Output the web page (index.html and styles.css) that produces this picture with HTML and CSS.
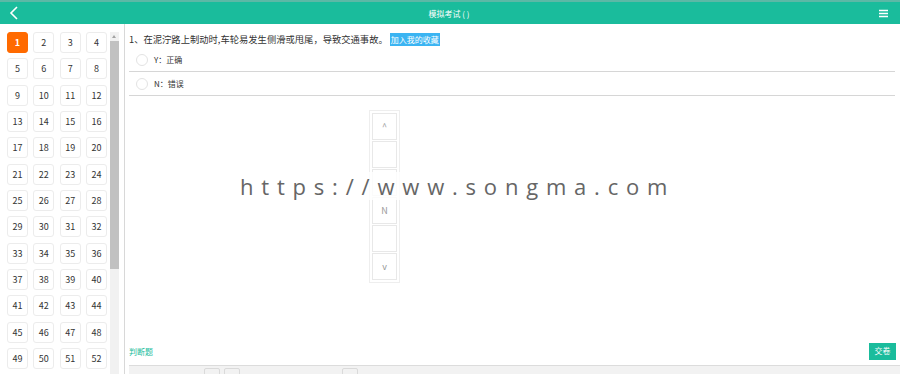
FILE: index.html
```html
<!DOCTYPE html>
<html lang="zh-CN">
<head>
  <meta charset="UTF-8">
  <meta name="viewport" content="width=device-width, initial-scale=1.0">
  <title>模拟考试</title>
  <link rel="stylesheet" href="styles.css">
</head>
<body>

  <div class="header">
    <span class="back">
      <svg width="10" height="14" viewBox="0 0 10 14"><path d="M8 1 L2 7 L8 13" fill="none" stroke="#fff" stroke-width="1.6"/></svg>
    </span>
    <span class="title">模拟考试 ( )</span>
    <span class="menu">
      <svg width="9" height="9" viewBox="0 0 9 9"><path d="M0 1.5 H9 M0 4.5 H9 M0 7.5 H9" stroke="#fff" stroke-width="1.3"/></svg>
    </span>
  </div>

  <div class="page">
    <div class="side">
      <div class="nums" id="nums"></div>
      <div class="sbar">
        <div class="sbar-up"></div>
        <div class="sbar-thumb"></div>
      </div>
    </div>

    <div class="main">
      <div class="question">
        1、在泥泞路上制动时,车轮易发生侧滑或甩尾，导致交通事故。<span class="fav">加入我的收藏</span>
      </div>
      <div class="option"><span class="radio"></span>Y：正确</div>
      <div class="option"><span class="radio"></span>N：错误</div>

      <div class="pager">
        <div class="pbtn">^</div>
        <div class="pbtn"></div>
        <div class="pbtn"></div>
        <div class="pbtn">N</div>
        <div class="pbtn"></div>
        <div class="pbtn">v</div>
      </div>

      <div class="foot">
        <span class="qtype">判断题</span>
        <span class="submit">交卷</span>
      </div>
      <div class="bottom">
        <span class="ghost g1"></span><span class="ghost g2"></span><span class="ghost g3"></span>
      </div>
    </div>
  </div>

  <div class="mark">https://www.songma.com</div>

<script>
const nums = document.getElementById('nums');
for (let i = 1; i <= 52; i++) {
  const d = document.createElement('div');
  d.className = 'num' + (i === 1 ? ' on' : '');
  d.textContent = i;
  nums.appendChild(d);
}
</script>
</body>
</html>
```

FILE: styles.css
```css
* { box-sizing: border-box; margin: 0; padding: 0; }
body { font-family: "Noto Sans CJK SC", "Liberation Sans", sans-serif; background: #fff; color: #333; width: 900px; height: 374px; overflow: hidden; position: relative; }

.header { height: 24px; background: #1abc9c; border-top: 2px solid #5cb8a6; display: flex; align-items: center; justify-content: space-between; padding: 0 12px 0 9px; color: #fff; }
.header .back { display: flex; }
.header .title { font-size: 8px; }
.header .menu { display: flex; }

.page { display: flex; height: 350px; }

.side { width: 125px; border-right: 1px solid #d8d8d8; display: flex; padding: 8px 0 0 7px; }
.nums { width: 100px; display: grid; grid-template-columns: repeat(4, 21px); grid-auto-rows: 21px; column-gap: 5.33px; row-gap: 5.33px; align-content: start; }
.num { border: 1px solid #ececec; border-radius: 3px; font-size: 9px; display: flex; align-items: center; justify-content: center; color: #333; }
.num.on { background: #ff6a00; border-color: #ff6a00; color: #fff; font-weight: bold; }

.sbar { width: 9px; margin-left: 3px; background: #f1f1f1; display: flex; flex-direction: column; }
.sbar-up { height: 9px; position: relative; }
.sbar-up::after { content: ""; position: absolute; left: 2px; top: 3px; border-left: 2.5px solid transparent; border-right: 2.5px solid transparent; border-bottom: 3px solid #a3a3a3; }
.sbar-thumb { height: 228px; background: #c1c1c1; }

.main { flex: 1; display: flex; flex-direction: column; padding: 0 0 0 4px; }
.question { font-size: 9.3px; padding: 6px 0 0 0; height: 24px; display: flex; align-items: center; white-space: nowrap; }
.fav { background: #3bb4f2; color: #fff; font-size: 8px; padding: 1px 1px; margin-left: 2px; }
.option { height: 24px; border-bottom: 1px solid #d6d6d6; display: flex; align-items: center; font-size: 8px; margin-right: 5px; }
.radio { width: 12px; height: 12px; border: 1px solid #e3e3e3; border-radius: 50%; margin: 0 6px 0 7px; }

.pager { margin: 14px 0 0 240px; width: 31px; border: 1px solid #eee; padding: 1px 2px; }
.pbtn { height: 27px; margin: 1px 0; border: 1px solid #e8e8e8; font-size: 9px; color: #999; display: flex; align-items: center; justify-content: center; }

.foot { margin-top: auto; display: flex; justify-content: space-between; align-items: center; padding: 0 4px 0 0; height: 20px; }
.qtype { font-size: 8px; color: #1abc9c; }
.submit { background: #1abc9c; color: #fff; font-size: 8px; padding: 2px 4px; height: 17px; width: 27px; text-align: center; }
.bottom { margin-top: 4px; height: 9px; background: #f2f2f2; border-top: 1px solid #dcdcdc; position: relative; }
.ghost { position: absolute; top: 2px; height: 8px; border: 1px solid #dadada; border-radius: 2px; }
.g1 { left: 75px; width: 16px; }
.g2 { left: 95px; width: 16px; }
.g3 { left: 213px; width: 16px; }

.mark { position: absolute; left: 240px; top: 172px; font-family: "Open Sans", "Liberation Sans", sans-serif; font-size: 22px; letter-spacing: 7.8px; color: #666; background: rgba(255,255,255,0.8); line-height: 28px; }
```
